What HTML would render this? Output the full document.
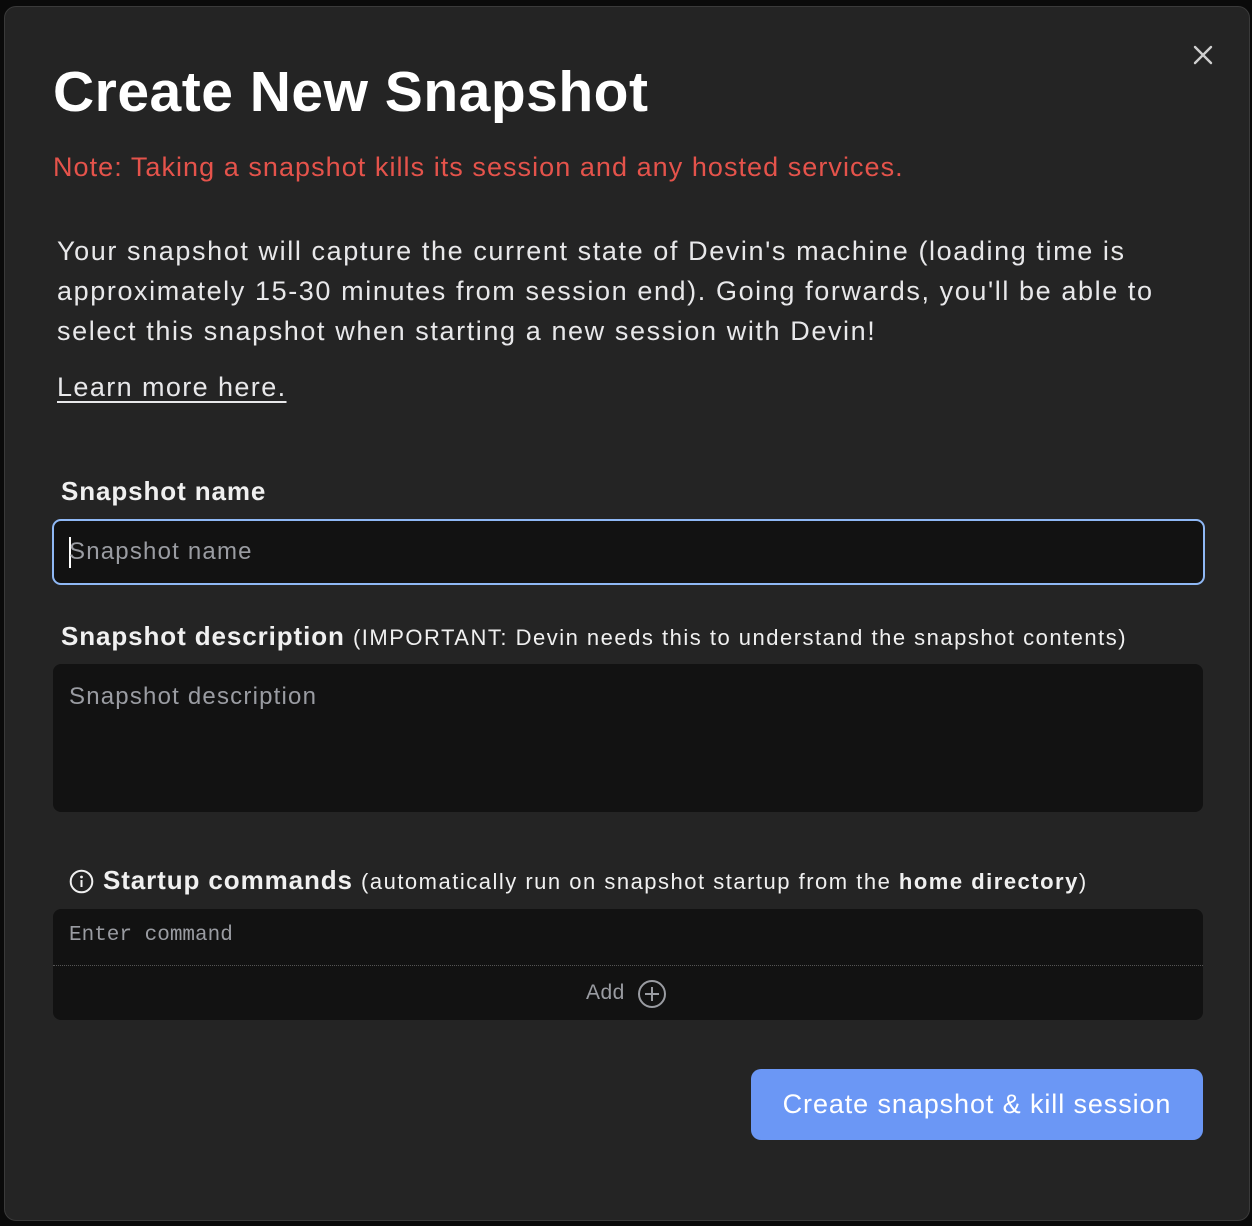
<!DOCTYPE html>
<html><head><meta charset="utf-8">
<style>
*{margin:0;padding:0;box-sizing:border-box}
html,body{width:1252px;height:1226px;background:#0a0a0a;overflow:hidden;font-family:"Liberation Sans",sans-serif}
.modal{position:absolute;left:4px;top:6px;width:1246px;height:1215px;background:#242424;border:1px solid #3a3a3a;border-radius:12px}
.a{position:absolute;white-space:nowrap}
h1{position:absolute;left:53px;top:57px;font-size:57px;font-weight:bold;color:#fff;letter-spacing:0.5px;line-height:70px}
.note{left:53px;top:150px;font-size:27px;color:#e5534b;line-height:34px;letter-spacing:1.05px}
.body{left:57px;top:231px;font-size:27px;color:#e8e8ea;line-height:40px;letter-spacing:1.6px}
.learn{left:57px;top:370px;font-size:27px;color:#e8e8ea;text-decoration:underline;text-underline-offset:5px;line-height:34px;letter-spacing:1.4px}
.lab{font-size:26px;color:#f0f0f0;font-weight:bold;line-height:34px;letter-spacing:0.9px}
.sub{font-size:22px;font-weight:normal;letter-spacing:1.5px}
.box{position:absolute;background:#121212;border-radius:8px}
.ph{position:absolute;font-size:24px;color:#9a9ca2;white-space:nowrap;letter-spacing:1.2px}
</style></head><body>
<div class="modal"></div>
<h1>Create New Snapshot</h1>
<svg class="a" style="left:1192px;top:44px" width="22" height="22" viewBox="0 0 22 22"><path d="M3 3L19 19M19 3L3 19" stroke="#cfcfcf" stroke-width="2.4" stroke-linecap="round"/></svg>
<div class="a note">Note: Taking a snapshot kills its session and any hosted services.</div>
<div class="a body">Your snapshot will capture the current state of Devin's machine (loading time is<br>approximately 15-30 minutes from session end). Going forwards, you'll be able to<br>select this snapshot when starting a new session with Devin!</div>
<div class="a learn">Learn more here.</div>
<div class="a lab" style="left:61px;top:474px">Snapshot name</div>
<div class="box" style="left:52px;top:519px;width:1153px;height:66px;border:2px solid #8fb8f5;border-radius:9px"></div>
<div style="position:absolute;left:69px;top:537px;width:2px;height:31px;background:#fff"></div>
<div class="ph" style="left:69px;top:538px">Snapshot name</div>
<div class="a lab" style="left:61px;top:619px">Snapshot description <span class="sub">(IMPORTANT: Devin needs this to understand the snapshot contents)</span></div>
<div class="box" style="left:53px;top:664px;width:1150px;height:148px"></div>
<div class="ph" style="left:69px;top:683px">Snapshot description</div>
<svg class="a" style="left:69px;top:869px" width="25" height="25" viewBox="0 0 25 25"><circle cx="12.5" cy="12.5" r="10.8" fill="none" stroke="#f0f0f0" stroke-width="2"/><circle cx="12.5" cy="8" r="1.4" fill="#f0f0f0"/><path d="M12.5 11v7" stroke="#f0f0f0" stroke-width="2"/></svg>
<div class="a lab" style="left:103px;top:863px">Startup commands <span class="sub">(automatically run on snapshot startup from the <b>home directory</b>)</span></div>
<div class="box" style="left:53px;top:909px;width:1150px;height:111px"></div>
<div style="position:absolute;left:53px;top:965px;width:1150px;border-top:1px dotted #555"></div>
<div class="ph" style="left:69px;top:924px;font-family:'Liberation Mono',monospace;font-size:21px;letter-spacing:0">Enter command</div>
<div class="ph" style="left:586px;top:981px;font-size:21px;letter-spacing:0.5px">Add</div>
<svg class="a" style="left:637px;top:979px" width="30" height="30" viewBox="0 0 30 30"><circle cx="15" cy="15" r="13" fill="none" stroke="#9a9ca2" stroke-width="2"/><path d="M15 8v14M8 15h14" stroke="#9a9ca2" stroke-width="2"/></svg>
<div style="position:absolute;left:751px;top:1069px;width:452px;height:71px;background:#6b97f5;border-radius:10px;color:#fff;font-size:27px;line-height:71px;text-align:center;white-space:nowrap;letter-spacing:0.9px">Create snapshot &amp; kill session</div>
</body></html>
